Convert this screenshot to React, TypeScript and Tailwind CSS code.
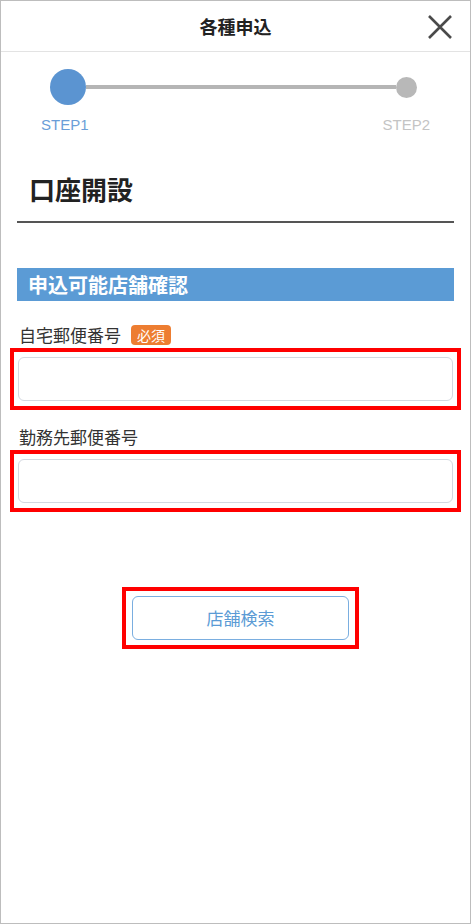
const jp = { fontFamily: '"Noto Sans CJK JP", "Noto Sans", sans-serif' };

const CloseIcon = () => (
  <svg width="26" height="26" viewBox="0 0 26 26" fill="none">
    <path d="M2 2L24 24M24 2L2 24" stroke="#4a4a4a" strokeWidth="2.6" strokeLinecap="butt" />
  </svg>
);

const Stepper = () => (
  <div className="pt-[17px]">
    <div className="flex items-center pl-[49px] pr-[53px]">
      <div className="w-[36px] h-[36px] rounded-full bg-[#5b94d1]" />
      <div className="flex-1 h-[4px] bg-[#b5b5b5]" />
      <div className="w-[21px] h-[21px] rounded-full bg-[#b8b8b8]" />
    </div>
    <div
      className="flex justify-between pl-[40px] pr-[40px] mt-[10px] text-[15px] leading-[20px]"
      style={{ fontFamily: '"Liberation Sans", Arial, sans-serif' }}
    >
      <span className="text-[#6a9ed8]">STEP1</span>
      <span className="text-[#c4c4c4]">STEP2</span>
    </div>
  </div>
);

const PostalField = ({ label, required }: { label: string; required?: boolean }) => (
  <div>
    <div className="flex items-center gap-[10px] h-[22px] pl-[2px]">
      <span className="text-[17px] text-[#333]">{label}</span>
      {required && (
        <span className="inline-flex items-center justify-center h-[20px] px-[6px] rounded-[4px] bg-[#ed7d31] text-white text-[14px] leading-none">
          必須
        </span>
      )}
    </div>
    <div className="-mx-[7px] mt-[2px] border-4 border-[#ff0000] px-[4px] py-[5px]">
      <input
        type="text"
        className="block w-full h-[44px] rounded-[6px] border border-[#d3d8e0] bg-white outline-none"
      />
    </div>
  </div>
);

export default function App() {
  return (
    <div
      className="w-[471px] h-[924px] border border-[#bdbdbd] bg-white overflow-hidden"
      style={jp}
    >
      <header className="relative h-[51px] border-b border-[#e3e3e3] flex items-center justify-center">
        <h1 className="text-[18px] font-bold text-[#222]">各種申込</h1>
        <button className="absolute right-[17px] top-[13px]">
          <CloseIcon />
        </button>
      </header>

      <Stepper />

      <main className="px-[16px]">
        <h2 className="mt-[38px] pl-[12px] text-[26px] leading-[32px] font-bold text-[#222]">口座開設</h2>
        <div className="mt-[16px] h-[2px] bg-[#555]" />

        <div className="mt-[45px] h-[33px] bg-[#5b9bd5] flex items-center pl-[11px]">
          <span className="text-[20px] font-bold text-white">申込可能店舗確認</span>
        </div>

        <div className="mt-[23px]">
          <PostalField label="自宅郵便番号" required />
        </div>
        <div className="mt-[16px]">
          <PostalField label="勤務先郵便番号" />
        </div>

        <div className="mt-[75px] flex justify-center">
          <div className="border-4 border-[#ff0000] px-[6px] py-[5px] ml-[10px]">
            <button className="w-[217px] h-[44px] rounded-[6px] border border-[#7aaee0] bg-white text-[17px] text-[#5b9bd5]">
              店舗検索
            </button>
          </div>
        </div>
      </main>
    </div>
  );
}
